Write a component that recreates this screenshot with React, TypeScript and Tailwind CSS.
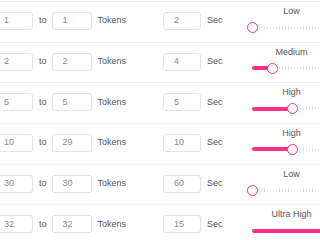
import React from "react";

type Row = { from: number; to: number; sec: number; level: number };

const levels = ["Low", "Medium", "High", "Very High", "Ultra High"];

const rows: Row[] = [
  { from: 1, to: 1, sec: 2, level: 0 },
  { from: 2, to: 2, sec: 4, level: 1 },
  { from: 5, to: 5, sec: 5, level: 2 },
  { from: 10, to: 29, sec: 10, level: 2 },
  { from: 30, to: 30, sec: 60, level: 0 },
  { from: 32, to: 32, sec: 15, level: 4 },
];

function Box({ value, w }: { value: number; w: string }) {
  return (
    <div
      className={`${w} h-[18px] shrink-0 rounded-[3px] border border-[#e3e3e3] bg-white pl-[10px] flex items-center text-[9px] text-[#888]`}
    >
      {value}
    </div>
  );
}

function LevelSlider({ level }: { level: number }) {
  // thumb moves 20px per step, 5 steps
  const pos = level * 20;
  return (
    <div className="w-[90px] shrink-0 flex flex-col items-center self-start pt-[4px]">
      <div className="text-[9px] leading-[10px] text-[#555]">{levels[level]}</div>
      <div className="relative mt-[6px] h-[11px] w-full">
        <div className="absolute left-[5px] right-[5px] top-[4px] h-[3px] bg-[repeating-linear-gradient(90deg,#e4e4e4_0px,#e4e4e4_1px,transparent_1px,transparent_3px)]" />
        <div
          className="absolute left-[5px] top-[3.5px] h-[4px] rounded-full bg-[#ff2e86]"
          style={{ width: pos }}
        />
        <div
          className="absolute top-0 h-[11px] w-[11px] rounded-full border-[1.5px] border-[#ff2e86] bg-white"
          style={{ left: pos }}
        />
      </div>
    </div>
  );
}

export default function App() {
  return (
    <div className="w-[320px] h-[240px] overflow-hidden bg-white pt-[1px] font-['Liberation_Sans',Arial,sans-serif]">
      {rows.map((r, i) => (
        <div
          key={i}
          className="h-[40.67px] border-t border-[#efefef] flex items-start -ml-[7px] pt-[10px]"
        >
          <div className="flex items-center h-[18px]">
            <Box value={r.from} w="w-[40px]" />
            <span className="ml-[6px] text-[9px] text-[#555]">to</span>
            <div className="ml-[5px]">
              <Box value={r.to} w="w-[40px]" />
            </div>
            <span className="ml-[6px] text-[9px] text-[#555]">Tokens</span>
            <div className="ml-[37px]">
              <Box value={r.sec} w="w-[38px]" />
            </div>
            <span className="ml-[6px] text-[9px] text-[#555]">Sec</span>
          </div>
          <div className="ml-[24px] -mt-[10px]">
            <LevelSlider level={r.level} />
          </div>
        </div>
      ))}
    </div>
  );
}
